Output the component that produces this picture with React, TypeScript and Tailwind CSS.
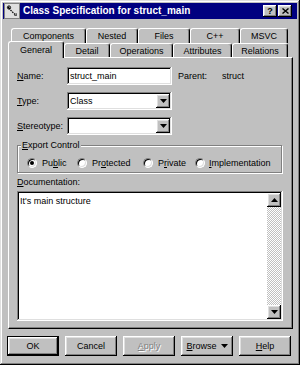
import React from "react";

const raised =
  "shadow-[inset_-1px_-1px_#000,inset_1px_1px_#fff,inset_-2px_-2px_#808080,inset_2px_2px_#dfdfdf]";
const sunken =
  "shadow-[inset_-1px_-1px_#fff,inset_1px_1px_#808080,inset_-2px_-2px_#dfdfdf,inset_2px_2px_#000]";

function Tri({ className = "" }: { className?: string }) {
  return (
    <svg width="7" height="4" viewBox="0 0 7 4" className={className}>
      <polygon points="0,0 7,0 3.5,4" fill="#000" />
    </svg>
  );
}

function TriUp({ className = "" }: { className?: string }) {
  return (
    <svg width="7" height="4" viewBox="0 0 7 4" className={className}>
      <polygon points="0,4 7,4 3.5,0" fill="#000" />
    </svg>
  );
}

function Combo({ text }: { text?: string }) {
  return (
    <div className={`w-[105px] h-[18px] bg-white p-[2px] flex ${sunken}`}>
      <div className="flex-1 flex items-center pl-[1px] leading-none">{text}</div>
      <div className={`w-[14px] h-full bg-[#c0c0c0] flex items-center justify-center ${raised}`}>
        <Tri />
      </div>
    </div>
  );
}

function Radio({ checked }: { checked?: boolean }) {
  return (
    <div className="w-[10px] h-[10px] rounded-full bg-white border border-t-[#808080] border-l-[#808080] border-b-white border-r-white flex items-center justify-center shadow-[inset_1px_1px_#000,inset_-1px_-1px_#dfdfdf]">
      {checked && <div className="w-[4px] h-[4px] rounded-full bg-black" />}
    </div>
  );
}

function TitleIcon() {
  return (
    <svg width="16" height="16" viewBox="0 0 16 16">
      <rect x="0.5" y="0.5" width="15" height="15" fill="#c0c0c0" stroke="#808080" />
      <rect x="1" y="1" width="14" height="14" fill="#dfdfdf" />
      <path d="M4 4 L6 6" stroke="#000" strokeWidth="1.5" />
      <circle cx="5" cy="4.5" r="1.6" fill="none" stroke="#000" strokeWidth="1" />
      <path d="M6.5 7 L12 12.5" stroke="#000" strokeWidth="1.2" strokeDasharray="1.5 1" />
      <path d="M10 12 L12.5 12.5 L12 10" stroke="#404040" strokeWidth="1" fill="none" />
    </svg>
  );
}

export default function App() {
  return (
    <div className="w-[300px] h-[365px] bg-[#c0c0c0] p-[3px] flex flex-col font-['Liberation_Sans',Arial,sans-serif] text-[9px] text-black leading-[11px] shadow-[inset_-1px_-1px_#000,inset_1px_1px_#dfdfdf,inset_-2px_-2px_#808080,inset_2px_2px_#fff]">
      {/* Title bar */}
      <div className="h-[16px] bg-[#000080] flex items-center pl-[1px] pr-[5px]">
        <TitleIcon />
        <div className="ml-[3px] text-white font-bold text-[10px] leading-none flex-1">
          Class Specification for struct_main
        </div>
        <div className={`w-[14px] h-[12px] bg-[#c0c0c0] flex items-center justify-center font-bold text-[9px] leading-none ${raised}`}>
          ?
        </div>
        <div className={`ml-[1px] w-[14px] h-[12px] bg-[#c0c0c0] flex items-center justify-center ${raised}`}>
          <svg width="7" height="6" viewBox="0 0 7 6">
            <path d="M0.5 0.5 L6.5 5.5 M6.5 0.5 L0.5 5.5" stroke="#000" strokeWidth="1.4" />
          </svg>
        </div>
      </div>

      <div className="ml-[5px] mt-[9px] flex flex-col">
        {/* Tab row 1 */}
        <div className="flex h-[15px] pl-[3px]">
          {[
            ["Components", "w-[75px]"],
            ["Nested", "w-[52px]"],
            ["Files", "w-[52px]"],
            ["C++", "w-[50px]"],
            ["MSVC", "w-[48px]"],
          ].map(([t, w]) => (
            <div
              key={t}
              className={`${w} h-full flex items-center justify-center pt-[1px] border-l border-t border-white border-r border-r-black rounded-t-[3px] shadow-[inset_-1px_0_#808080]`}
            >
              {t}
            </div>
          ))}
        </div>
        {/* Tab row 2 */}
        <div className="relative flex items-end h-[16px] -mt-[2px]">
          <div className="relative z-10 w-[56px] h-[17px] -mb-[1px] bg-[#c0c0c0] flex items-start justify-center pt-[3px] border-l border-t border-white border-r border-r-black rounded-t-[3px] shadow-[inset_-1px_0_#808080]">
            General
          </div>
          {[
            ["Detail", "w-[46px]"],
            ["Operations", "w-[63px]"],
            ["Attributes", "w-[59px]"],
            ["Relations", "w-[56px]"],
          ].map(([t, w]) => (
            <div
              key={t}
              className={`${w} h-[14px] bg-[#c0c0c0] flex items-center justify-center pt-[1px] border-l border-t border-white border-r border-r-black rounded-t-[3px] shadow-[inset_-1px_0_#808080]`}
            >
              {t}
            </div>
          ))}
        </div>

        {/* Panel */}
        <div className="w-[285px] h-[272px] border-l border-t border-white border-r border-b border-r-black border-b-black shadow-[inset_-1px_-1px_#808080] pl-[8px] pt-[9px] flex flex-col">
          {/* Name */}
          <div className="flex items-center h-[18px]">
            <div className="w-[50px]">
              <span className="underline">N</span>ame:
            </div>
            <div className={`w-[105px] h-[18px] bg-white flex items-center pl-[3px] ${sunken}`}>
              struct_main
            </div>
            <div className="ml-[6px] w-[44px]">Parent:</div>
            <div>struct</div>
          </div>
          {/* Type */}
          <div className="flex items-center h-[18px] mt-[7px]">
            <div className="w-[50px]">
              <span className="underline">T</span>ype:
            </div>
            <Combo text="Class" />
          </div>
          {/* Stereotype */}
          <div className="flex items-center h-[18px] mt-[7px]">
            <div className="w-[50px]">
              <span className="underline">S</span>tereotype:
            </div>
            <Combo />
          </div>

          {/* Export Control */}
          <div className="relative mt-[10px] w-[265px] h-[28px] border border-[#808080] shadow-[inset_1px_1px_#fff,1px_1px_#fff] flex items-center pt-[8px] pl-[9px]">
            <div className="absolute left-[3px] -top-[6px] bg-[#c0c0c0] px-[1px]">
              <span className="underline">E</span>xport Control
            </div>
            <div className="w-[50px] flex items-center">
              <Radio checked />
              <span className="ml-[5px]">
                Pu<span className="underline">b</span>lic
              </span>
            </div>
            <div className="w-[66px] flex items-center">
              <Radio />
              <span className="ml-[5px]">
                Pr<span className="underline">o</span>tected
              </span>
            </div>
            <div className="w-[52px] flex items-center">
              <Radio />
              <span className="ml-[5px]">
                P<span className="underline">r</span>ivate
              </span>
            </div>
            <div className="flex items-center">
              <Radio />
              <span className="ml-[4px]">
                <span className="underline">I</span>mplementation
              </span>
            </div>
          </div>

          {/* Documentation */}
          <div className="mt-[4px] h-[11px]">
            <span className="underline">D</span>ocumentation:
          </div>
          <div className={`mt-[3px] w-[266px] h-[130px] bg-white p-[2px] flex ${sunken}`}>
            <div className="flex-1 pl-[1px] pt-[3px]">It's main structure</div>
            <div className="w-[14px] h-full flex flex-col">
              <div className={`h-[14px] bg-[#c0c0c0] flex items-center justify-center ${raised}`}>
                <TriUp />
              </div>
              <div className="flex-1 bg-[image:repeating-conic-gradient(#c0c0c0_0%_25%,#fff_0%_50%)] bg-[length:2px_2px]" />
              <div className={`h-[14px] bg-[#c0c0c0] flex items-center justify-center ${raised}`}>
                <Tri />
              </div>
            </div>
          </div>
        </div>
      </div>

      {/* Buttons */}
      <div className="mt-[7px] ml-[4px] flex gap-[6px] h-[20px]">
        <div className="w-[52px] h-[20px] border border-black">
          <div className={`w-full h-full flex items-center justify-center ${raised}`}>OK</div>
        </div>
        <div className={`w-[52px] h-[20px] flex items-center justify-center ${raised}`}>Cancel</div>
        <div className={`w-[52px] h-[20px] flex items-center justify-center text-[#808080] [text-shadow:1px_1px_#fff] ${raised}`}>
          <span>
            <span className="underline">A</span>pply
          </span>
        </div>
        <div className={`w-[52px] h-[20px] flex items-center justify-center ${raised}`}>
          <span>
            <span className="underline">B</span>rowse
          </span>
          <Tri className="ml-[4px]" />
        </div>
        <div className={`w-[52px] h-[20px] flex items-center justify-center ${raised}`}>
          <span>
            <span className="underline">H</span>elp
          </span>
        </div>
      </div>
    </div>
  );
}
